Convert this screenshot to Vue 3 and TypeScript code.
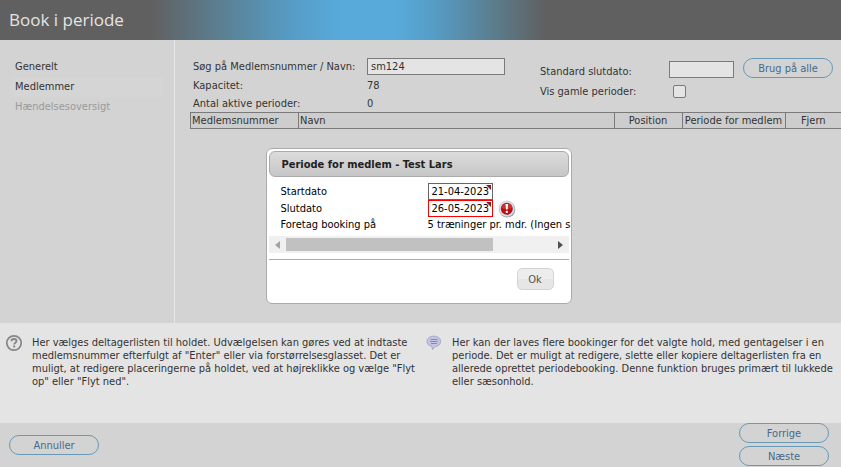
<script setup lang="ts">
import { ref } from 'vue'

interface Step {
  label: string
  state: 'normal' | 'current' | 'disabled'
}

const steps: Step[] = [
  { label: 'Generelt', state: 'normal' },
  { label: 'Medlemmer', state: 'current' },
  { label: 'Hændelsesoversigt', state: 'disabled' },
]

const search = ref('sm124')
const standardEnd = ref('')
const showOld = ref(false)
const startDate = ref('21-04-2023')
const endDate = ref('26-05-2023')
</script>

<template>
  <div class="page">
    <header class="top">
      <h1>Book i periode</h1>
    </header>

    <div class="body">
      <nav class="steps">
        <a v-for="s in steps" :key="s.label" href="#" :class="['step', s.state]">{{ s.label }}</a>
      </nav>

      <main class="content">
        <div class="forms">
          <div class="form-left">
            <label for="search">Søg på Medlemsnummer / Navn:</label>
            <input id="search" v-model="search" type="text" class="field" />
            <span>Kapacitet:</span>
            <span>78</span>
            <span>Antal aktive perioder:</span>
            <span>0</span>
          </div>
          <div class="form-right">
            <label for="std-end" class="low">Standard slutdato:</label>
            <div class="end-row">
              <input id="std-end" v-model="standardEnd" type="text" class="field short" />
              <button type="button" class="pill">Brug på alle</button>
            </div>
            <label for="show-old">Vis gamle perioder:</label>
            <input id="show-old" v-model="showOld" type="checkbox" class="check" />
          </div>
        </div>

        <table class="members">
          <thead>
            <tr>
              <th class="number">Medlemsnummer</th>
              <th class="name">Navn</th>
              <th class="position">Position</th>
              <th class="period">Periode for medlem</th>
              <th class="remove">Fjern</th>
            </tr>
          </thead>
        </table>
      </main>
    </div>

    <section class="help">
      <div class="tip">
        <svg class="tip-icon" width="18" height="18" viewBox="0 0 18 18">
          <circle cx="9" cy="9" r="7.2" fill="none" stroke="#858585" stroke-width="1.7" />
          <path d="M6.500 7.300C6.500 5.700 7.600 5 9 5s2.500.7 2.500 2.100c0 1.600-2.300 1.700-2.300 3.400" fill="none" stroke="#858585" stroke-width="1.9" />
          <rect x="8.200" y="11.500" width="2" height="2" fill="#858585" />
        </svg>
        <p>Her vælges deltagerlisten til holdet. Udvælgelsen kan gøres ved at indtaste medlemsnummer efterfulgt af "Enter" eller via forstørrelsesglasset. Det er muligt, at redigere placeringerne på holdet, ved at højreklikke og vælge "Flyt op" eller "Flyt ned".</p>
      </div>
      <div class="tip">
        <svg class="tip-icon" width="18" height="18" viewBox="0 0 18 18">
          <path d="M9 2.200c4 0 6.600 2.100 6.600 5.200 0 2.900-2.300 4.800-5.400 5.100L7.500 15.500l-.6-3.200C3.800 11.700 2 9.900 2 7.400 2 4.300 5 2.200 9 2.200z" fill="#c4c5e4" stroke="#a6a7c8" />
          <path d="M5.500 5.500h7M5 7.500h7.500M6 9.500h6" stroke="#8586bd" fill="none" />
        </svg>
        <p>Her kan der laves flere bookinger for det valgte hold, med gentagelser i en periode. Det er muligt at redigere, slette eller kopiere deltagerlisten fra en allerede oprettet periodebooking. Denne funktion bruges primært til lukkede eller sæsonhold.</p>
      </div>
    </section>

    <footer class="actions">
      <button type="button" class="pill">Annuller</button>
      <div class="stack">
        <button type="button" class="pill">Forrige</button>
        <button type="button" class="pill">Næste</button>
      </div>
    </footer>

    <div class="overlay">
      <div class="dialog" role="dialog" aria-labelledby="dialog-title">
        <h2 id="dialog-title">Periode for medlem - Test Lars</h2>
        <div class="dialog-form">
          <label for="start">Startdato</label>
          <div class="date-cell">
            <span class="date"><input id="start" v-model="startDate" type="text" /></span>
          </div>
          <label for="end">Slutdato</label>
          <div class="date-cell">
            <span class="date invalid"><input id="end" v-model="endDate" type="text" /></span>
            <svg class="alert" width="18" height="18" viewBox="0 0 18 18">
              <circle cx="9.300" cy="9.500" r="8" fill="#8e98a8" />
              <circle cx="8.800" cy="8.800" r="7.800" fill="#dce3ee" stroke="#b4bfd0" stroke-width=".6" />
              <circle cx="8.800" cy="8.800" r="6" fill="#b90f12" />
              <path d="M3.300 8a5.600 5.600 0 0 1 11 0q-5.500 2-11 0z" fill="#d64a45" opacity=".6" />
              <path d="M7.500 4h2.600l-.5 5.600H8z" fill="#fff" />
              <rect x="7.800" y="10.800" width="2" height="2.200" rx=".5" fill="#fff" />
            </svg>
          </div>
          <span class="rule">Foretag booking på</span>
          <span class="rule">5 træninger pr. mdr. (Ingen s</span>
        </div>
        <div class="scroll">
          <button type="button" aria-label="Venstre">
            <svg width="5" height="8" viewBox="0 0 5 8"><path d="M5 0v8L0 4z" fill="#a3a3a3" /></svg>
          </button>
          <div class="track"><div class="thumb"></div></div>
          <button type="button" aria-label="Højre">
            <svg width="5" height="8" viewBox="0 0 5 8"><path d="M0 0v8l5-4z" fill="#505050" /></svg>
          </button>
        </div>
        <div class="dialog-actions">
          <button type="button" class="ok">Ok</button>
        </div>
      </div>
    </div>
  </div>
</template>

<style>
body {
  margin: 0;
}
</style>

<style scoped>
* {
  box-sizing: border-box;
}

.page {
  position: relative;
  display: flex;
  flex-direction: column;
  min-height: 100vh;
  overflow: hidden;
  background: #d3d3d3;
  color: #333;
  font-family: Tahoma, "DejaVu Sans Condensed", "Noto Sans", sans-serif;
  font-size: 11px;
  line-height: 13px;
}

input,
button {
  font: inherit;
  color: inherit;
  margin: 0;
}

.top {
  display: flex;
  align-items: center;
  height: 40px;
  padding-left: 9px;
  background: linear-gradient(90deg, #606060 150px, #5b7f91 220px, #569cc5 290px, #58aadb 340px, #58aadb 395px, #569cc5 435px, #5b7f91 490px, #606060 545px);
}

h1 {
  margin: 0;
  color: #e4e4e4;
  font-family: "Open Sans", sans-serif;
  font-size: 17px;
  font-weight: 400;
  line-height: 20px;
}

.body {
  display: flex;
  flex: 1;
}

.steps {
  display: flex;
  flex-direction: column;
  width: 175px;
  padding: 17px 11px 16px 10px;
  border-right: 1px solid #e6e6e6;
}

.step {
  padding: 0 5px;
  line-height: 20px;
  color: #333;
  text-decoration: none;
}

.step.current {
  background: #d5d5d5;
}

.step.disabled {
  color: #9a9a9a;
}

.content {
  flex: 1;
  min-width: 0;
  padding: 18px 0 16px 15px;
}

.forms {
  display: flex;
  justify-content: space-between;
  padding: 0 8px 0 3px;
}

.form-left {
  display: grid;
  grid-template-columns: 174px 138px;
  grid-template-rows: 17px 21px 15px;
  align-items: center;
}

.form-right {
  display: grid;
  grid-template-columns: 129px auto;
  grid-template-rows: 20px 26px;
  align-content: start;
  align-items: center;
}

.low {
  align-self: end;
}

.field {
  width: 100%;
  height: 17px;
  padding: 0 3px;
  border: 1px solid #7a7a7a;
  border-radius: 0;
  background: #e4e4e4;
}

.field.short {
  width: 65px;
}

.end-row {
  display: flex;
  align-items: flex-end;
  gap: 9px;
}

.check {
  appearance: none;
  width: 13px;
  height: 13px;
  margin-left: 4px;
  border: 1px solid #7a7a7a;
  border-radius: 2px;
  background: #e4e4e4;
}

.pill {
  width: 90px;
  height: 20px;
  padding: 0;
  border: 1px solid #6899b5;
  border-radius: 10px;
  background: transparent;
  color: #466a8b;
}

.members {
  width: 100%;
  margin-top: 1px;
  border-collapse: collapse;
  table-layout: fixed;
}

.members th {
  height: 16px;
  padding: 0 1px;
  border: 1px solid #7a7a7a;
  background: #cdcdcd;
  font-weight: 400;
  text-align: center;
  white-space: nowrap;
}

.members .number,
.members .name {
  text-align: left;
}

.members .number {
  width: 108px;
}

.members .position {
  width: 68px;
}

.members .period {
  width: 103px;
}

.members .remove {
  width: 56px;
  border-right: 0;
}

.help {
  display: grid;
  grid-template-columns: 1fr 1fr;
  min-height: 100px;
  padding: 13px 0 13px 5px;
  background: #e4e4e4;
}

.tip {
  display: flex;
  gap: 9px;
  padding-right: 4px;
}

.tip + .tip {
  padding-left: 2px;
}

.tip-icon {
  flex: none;
  margin-top: -2px;
}

.tip p {
  margin: 0;
}

.actions {
  display: flex;
  justify-content: space-between;
  align-items: flex-end;
  height: 44px;
  padding: 0 12px 0 9px;
}

.actions > .pill {
  margin-bottom: 12px;
}

.stack {
  display: flex;
  flex-direction: column;
  gap: 3px;
  padding-bottom: 1px;
}

.overlay {
  position: absolute;
  inset: 0;
  display: flex;
  align-items: flex-start;
  justify-content: center;
  padding: 148px 4px 0 0;
}

.dialog {
  width: 306px;
  padding: 2px 2px 13px;
  border: 1px solid #aaa;
  border-radius: 6px;
  background: #fff;
  color: #000;
}

h2 {
  margin: 0;
  padding: 2px 12px 0;
  border: 1px solid #aaa;
  border-radius: 6px;
  background: linear-gradient(#dcdcdc, #c6c6c6);
  color: #222;
  font-size: 11px;
  font-weight: 700;
  line-height: 22px;
}

.dialog-form {
  display: grid;
  grid-template-columns: 147px 1fr;
  grid-template-rows: 17px 17px 14px;
  align-items: center;
  padding: 6px 0 5px 12px;
}

.date-cell {
  display: flex;
  align-items: center;
  gap: 5px;
}

.date {
  position: relative;
  display: flex;
  width: 65px;
  height: 17px;
  border: 1px solid #666;
}

.date::after {
  content: "";
  position: absolute;
  top: 1px;
  right: 1px;
  border-top: 5px solid #8b1a1e;
  border-left: 5px solid transparent;
}

.date.invalid {
  border-color: #f00;
}

.date input {
  width: 100%;
  padding: 0 0 0 3px;
  border: 0;
  background: #fff;
}

.rule {
  white-space: nowrap;
}

.scroll {
  display: flex;
  height: 17px;
  background: #f0f0f0;
}

.scroll button {
  display: flex;
  align-items: center;
  justify-content: center;
  width: 17px;
  padding: 0;
  border: 0;
  background: transparent;
}

.track {
  display: flex;
  flex: 1;
  padding: 2px 0;
}

.thumb {
  width: 78%;
  background: #c1c1c1;
}

.dialog-actions {
  display: flex;
  justify-content: flex-end;
  margin-top: 6px;
  padding: 8px 15px 0 0;
  border-top: 1px solid #aaa;
}

.ok {
  width: 37px;
  height: 22px;
  padding: 0;
  border: 1px solid #d3d3d3;
  border-radius: 5px;
  background: linear-gradient(#ededed 50%, #e6e6e6 50%);
  color: #555;
}
</style>
